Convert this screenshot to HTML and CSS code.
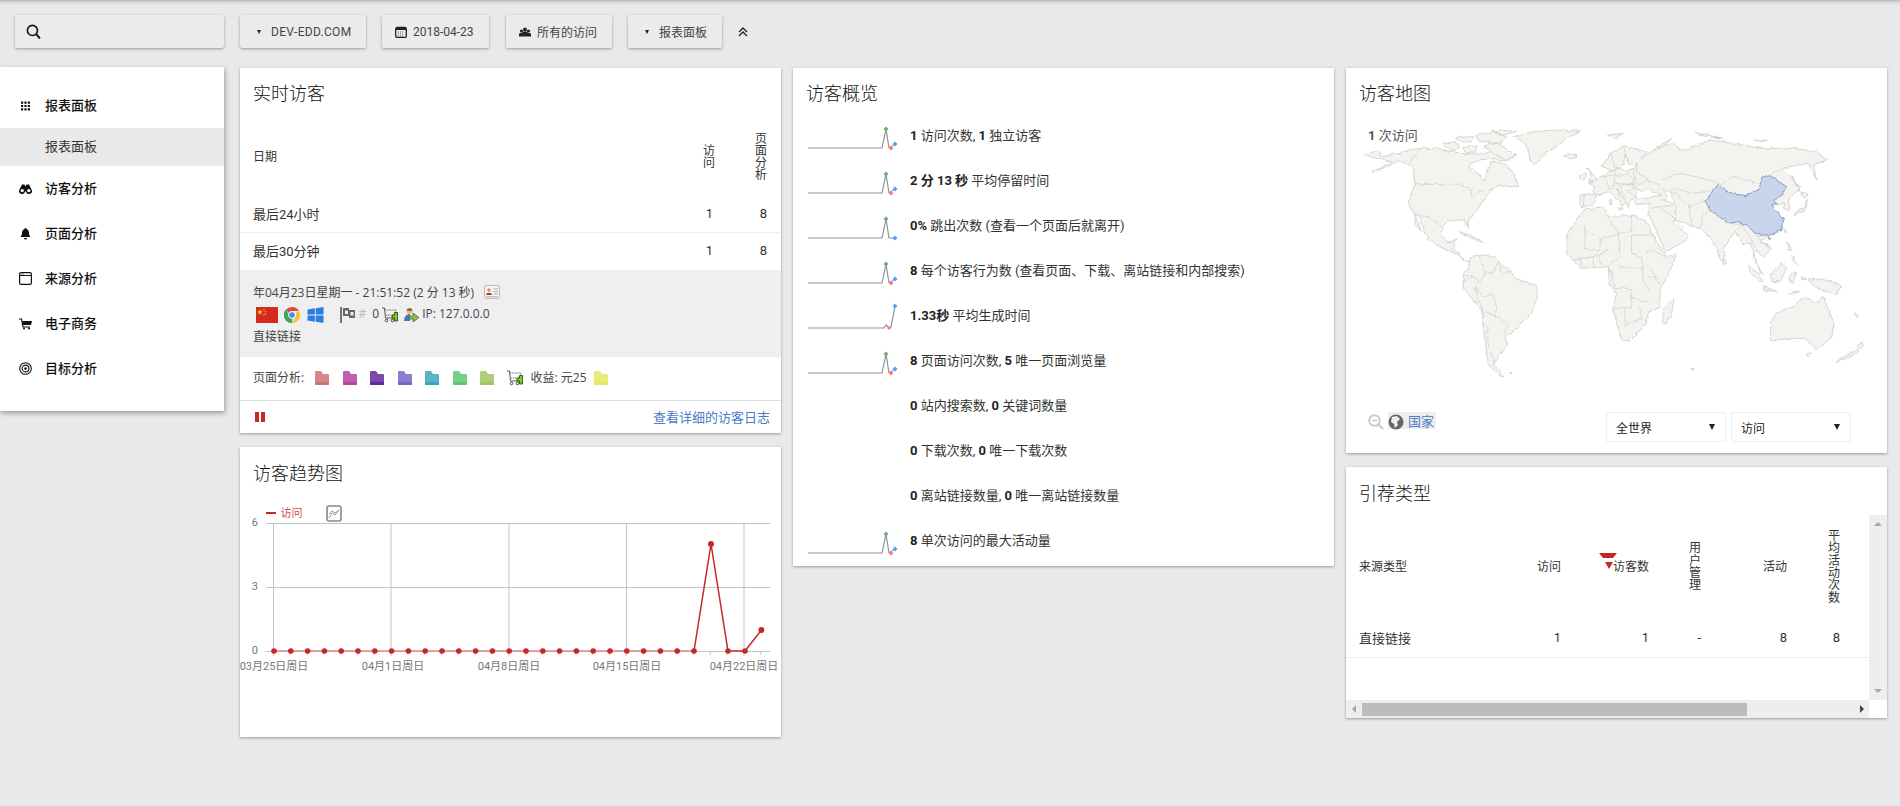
FILE: index.html
```html
<!DOCTYPE html>
<html lang="zh">
<head>
<meta charset="utf-8">
<title>报表面板</title>
<link rel="stylesheet" href="styles.css">
</head>
<body>
<svg class="defs" width="0" height="0" aria-hidden="true">
  <symbol id="folder" viewBox="0 0 14 14">
    <path d="M1 0h5l2 3h5a1 1 0 0 1 1 1v9a1 1 0 0 1-1 1H1a1 1 0 0 1-1-1V1a1 1 0 0 1 1-1z" fill="currentColor" opacity=".85"/>
    <path d="M0 11h14v2a1 1 0 0 1-1 1H1a1 1 0 0 1-1-1z" fill="currentColor"/>
  </symbol>
  <symbol id="cart" viewBox="0 0 16 16">
    <path d="M0 1h2.500l1 10h8" fill="none" stroke="#555" stroke-width="1"/>
    <path d="M3 3h11l-1 5H3.500" fill="none" stroke="#777" stroke-width="1" stroke-dasharray="1.500 .7"/>
    <circle cx="4.500" cy="13.500" r="1.300" fill="none" stroke="#444"/>
    <circle cx="10.500" cy="13.500" r="1.300" fill="none" stroke="#444"/>
    <path d="M10 8h2.500v-2.500h3v2.500h.5v3h-.5v3h-3v-3H10z" fill="#6fd11d" stroke="#1c3a00" stroke-width=".8"/>
  </symbol>
  <symbol id="spark" viewBox="0 0 90 30">
    <path d="M0 27H74L78 8L81 27" fill="none" stroke="#8b93a1" stroke-width="1.200"/>
    <path d="M81 27L87 23" fill="none" stroke="#8b93a1" stroke-width="1"/>
    <path d="M78 5.500l2.500 2.500-2.500 2.500-2.500-2.500z" fill="#6fae6f"/>
    <path d="M83 24.500l2.500 2.500-2.500 2.500-2.500-2.500z" fill="#f77b7b"/>
    <path d="M87 20.500l2.500 2.500-2.500 2.500-2.500-2.500z" fill="#5b9cf6"/>
  </symbol>
  <symbol id="spark-flat" viewBox="0 0 90 30">
    <path d="M0 27H74L78 8L81 27H87" fill="none" stroke="#8b93a1" stroke-width="1.200"/>
    <path d="M78 5.500l2.500 2.500-2.500 2.500-2.500-2.500z" fill="#6fae6f"/>
    <path d="M87 24.500l2.500 2.500-2.500 2.500-2.500-2.500z" fill="#5b9cf6"/>
  </symbol>
  <symbol id="spark-up" viewBox="0 0 90 30">
    <path d="M0 27H76L78 24L81 27L83 26L87 5" fill="none" stroke="#8b93a1" stroke-width="1.200"/>
    <path d="M87 2.500l2.500 2.500-2.500 2.500-2.500-2.500z" fill="#5b9cf6"/>
    <path d="M81 25l2 2-2 2-2-2z" fill="#f77b7b"/>
  </symbol>
</svg>
<div class="topline"></div>
<header class="toolbar">
  <div class="tb search">
    <svg class="ic14" viewBox="0 0 14 14"><circle cx="6" cy="6" r="4.700" fill="none" stroke="#111" stroke-width="1.500"/><path d="M9.500 9.500L13 13.500" stroke="#111" stroke-width="1.800"/></svg>
  </div>
  <div class="tb tb-site"><span class="caret"></span><span>DEV-EDD.COM</span></div>
  <div class="tb tb-date">
    <svg class="ic12" viewBox="0 0 12 12"><rect x=".7" y="1.500" width="10.600" height="10" rx="1.500" fill="none" stroke="#222" stroke-width="1.300"/><path d="M1 1.500h10V4H1z" fill="#222"/><path d="M3 6h6M3 8h6M3 10h6" stroke="#666" stroke-dasharray="1 1"/></svg>
    <span>2018-04-23</span>
  </div>
  <div class="tb tb-seg">
    <svg class="ic12" viewBox="0 0 12 12"><g fill="#222"><circle cx="2.500" cy="5" r="1.600"/><circle cx="9.500" cy="5" r="1.600"/><circle cx="6" cy="3.500" r="1.900"/><path d="M0 10.500V8c0-1.500 4-1.500 5 0v2.500zM7 10.500V8c1-1.500 5-1.500 5 0v2.500zM3 10.500V7c0-2 6-2 6 0v3.500z"/></g></svg>
    <span>所有的访问</span>
  </div>
  <div class="tb tb-board"><span class="caret"></span><span>报表面板</span></div>
  <svg class="chev" viewBox="0 0 10 10"><path d="M1 5l4-4 4 4M1 9l4-4 4 4" fill="none" stroke="#222" stroke-width="1.300"/></svg>
</header>

<main class="layout">
  <nav class="sidebar">
    <div class="nav-item">
      <svg class="nav-ic" viewBox="0 0 13 13"><path d="M2 2.500h2.200v2.200H2zM5.400 2.500h2.200v2.200H5.400zM8.800 2.500H11v2.200H8.800zM2 5.900h2.200v2.200H2zM5.400 5.900h2.200v2.200H5.400zM8.800 5.900H11v2.200H8.800zM2 9.300h2.200v2.200H2zM5.400 9.300h2.200v2.200H5.400zM8.800 9.300H11v2.200H8.800z" fill="#111"/></svg>
      <span>报表面板</span>
    </div>
    <div class="nav-sub">报表面板</div>
    <div class="nav-item">
      <svg class="nav-ic" viewBox="0 0 13 13"><path d="M3 2.500h2.500l1 2 1-2H10l3 6a3 3 0 0 1-6 1H6a3 3 0 0 1-6-1z" fill="#111"/><circle cx="3.200" cy="8.600" r="1.700" fill="#fff"/><circle cx="9.800" cy="8.600" r="1.700" fill="#fff"/></svg>
      <span>访客分析</span>
    </div>
    <div class="nav-item">
      <svg class="nav-ic" viewBox="0 0 13 13"><path d="M6.500 1a1 1 0 0 1 1 1c2 .5 2.500 2.500 2.500 4.500 0 1.500 1 2.500 1.500 3.500h-10C2 9 3 8 3 6.500 3 4.500 3.500 2.500 5.500 2a1 1 0 0 1 1-1z" fill="#111"/><path d="M5 11h3a1.500 1.500 0 0 1-3 0z" fill="#111"/></svg>
      <span>页面分析</span>
    </div>
    <div class="nav-item">
      <svg class="nav-ic" viewBox="0 0 13 13"><rect x=".6" y=".6" width="11.800" height="11.800" rx="1.500" fill="none" stroke="#111" stroke-width="1.200"/><path d="M1 3.500h11" stroke="#111"/><path d="M2 2h3" stroke="#777"/></svg>
      <span>来源分析</span>
    </div>
    <div class="nav-item">
      <svg class="nav-ic" viewBox="0 0 13 13"><path d="M0 2h2.500l1.500 8h7" fill="none" stroke="#111" stroke-width="1.200"/><path d="M3.200 4H13l-1 4H4z" fill="#111"/><circle cx="5" cy="11.500" r="1" fill="#111"/><circle cx="10" cy="11.500" r="1" fill="#111"/></svg>
      <span>电子商务</span>
    </div>
    <div class="nav-item">
      <svg class="nav-ic" viewBox="0 0 13 13"><circle cx="6.500" cy="6.500" r="5.800" fill="none" stroke="#111" stroke-width="1.100"/><circle cx="6.500" cy="6.500" r="3.400" fill="none" stroke="#111" stroke-width="1.100"/><circle cx="6.500" cy="6.500" r="1.300" fill="#111"/></svg>
      <span>目标分析</span>
    </div>
  </nav>

  <div class="col">
    <section class="card card-live">
      <h2 class="card-title">实时访客</h2>
      <table class="live-table">
        <thead>
          <tr><th class="c-name">日期</th><th class="c-a">访问</th><th class="c-b">页面分析</th></tr>
        </thead>
        <tbody>
          <tr><td class="c-name">最后24小时</td><td class="c-a">1</td><td class="c-b">8</td></tr>
          <tr><td class="c-name">最后30分钟</td><td class="c-a">1</td><td class="c-b">8</td></tr>
        </tbody>
      </table>
      <div class="visit">
        <div class="visit-line">
          <span>年04月23日星期一 - 21:51:52 (2 分 13 秒)</span>
          <svg class="ic-card" viewBox="0 0 16 14"><rect x=".5" y=".5" width="15" height="13" rx="1" fill="#f4f4f4" stroke="#bbb"/><circle cx="5" cy="5" r="1.800" fill="#d98a80"/><path d="M2 10c0-3 6-3 6 0z" fill="#c0392b"/><path d="M9.500 4H14M9.500 6.500H14M9.500 9H14M2 11.800h12" stroke="#aaa"/></svg>
        </div>
        <div class="visit-icons">
          <svg class="flag" viewBox="0 0 22 16"><rect width="22" height="16" fill="#d52b1e"/><path d="M4 2l.8 2.200H7L5.200 5.500l.7 2.200L4 6.400 2.100 7.700l.7-2.200L1 4.200h2.200z" fill="#f6c23a"/><circle cx="8" cy="2.500" r=".7" fill="#f6c23a"/><circle cx="9.500" cy="4.500" r=".7" fill="#f6c23a"/><circle cx="9.500" cy="6.500" r=".7" fill="#f6c23a"/><circle cx="8" cy="8" r=".7" fill="#f6c23a"/></svg>
          <svg class="chrome" viewBox="0 0 16 16"><path d="M8 0a8 8 0 0 1 7 4H8a4 4 0 0 0-3.500 2L2 2.500A8 8 0 0 1 8 0z" fill="#dd4b39"/><path d="M15 4a8 8 0 0 1-7 12l3.500-6a4 4 0 0 0 0-4z" fill="#f6c23a"/><path d="M2 2.500L5.500 9a4 4 0 0 0 3 1.500L8 16A8 8 0 0 1 2 2.500z" fill="#3aa757"/><circle cx="8" cy="8" r="3.400" fill="#4a8af4" stroke="#fff" stroke-width="1"/></svg>
          <svg class="win" viewBox="0 0 16 16"><path d="M0 2.500l7.400-1.200v6.300H0zM8.200 1.200L16 0v7.600H8.200zM0 8.400h7.400v6.300L0 13.500zM8.200 8.400H16V16l-7.800-1.200z" fill="#2b7de0"/></svg>
          <svg class="pflag" viewBox="0 0 16 16"><path d="M1 0v16" stroke="#555" stroke-width="1.600"/><path d="M3 1h6v2h6v8H9V9H3z" fill="#666"/><rect x="5" y="3.500" width="3" height="3.500" fill="#eee"/><rect x="10.500" y="5" width="3" height="3.500" fill="#eee"/></svg>
          <span class="hash">#</span>
          <span class="zero">0</span>
          <svg class="ic16 ic-cart"><use href="#cart"/></svg>
          <svg class="ic16 ic-user" viewBox="0 0 16 16"><circle cx="6.500" cy="4" r="3" fill="#e8b48a"/><path d="M3.500 3.500C4 1 9 .5 9.500 3.500z" fill="#7a4a24"/><path d="M1 14c0-6 4-7 6-7v7z" fill="#4a78c0"/><path d="M6 9h4V6l6 4.500L10 15v-3H6z" fill="#8db85a" stroke="#3e6a20" stroke-width=".7"/></svg>
          <span class="ip">IP: 127.0.0.0</span>
        </div>
        <div class="visit-line">直接链接</div>
      </div>
      <div class="pages">
        <span class="pages-label">页面分析:</span>
        <svg class="fld f1"><use href="#folder"/></svg>
        <svg class="fld f2"><use href="#folder"/></svg>
        <svg class="fld f3"><use href="#folder"/></svg>
        <svg class="fld f4"><use href="#folder"/></svg>
        <svg class="fld f5"><use href="#folder"/></svg>
        <svg class="fld f6"><use href="#folder"/></svg>
        <svg class="fld f7"><use href="#folder"/></svg>
        <svg class="ic16 pg-cart"><use href="#cart"/></svg>
        <span class="rev">收益: 元25</span>
        <svg class="fld f8"><use href="#folder"/></svg>
      </div>
      <div class="live-foot">
        <span class="pause"><i></i><i></i></span>
        <a class="link">查看详细的访客日志</a>
      </div>
    </section>

    <section class="card card-trend">
      <h2 class="card-title">访客趋势图</h2>
      <svg class="chart" width="541" height="180" viewBox="0 0 541 180">
        <path class="leg" d="M26 13h10"/>
        <text class="leg-t" x="40.500" y="17">访问</text>
        <g class="exp"><rect x="87" y="6" width="14" height="15" rx="2"/><path d="M89 18l3-5 3 2 4-5M89 14l3-3 3 2 4-3"/></g>
        <g class="grid">
          <path d="M26 23.500H530M26 87.500H530M26 151.500H530"/>
          <path d="M33.500 23V151M151 23V151M269 23V151M386.500 23V151M504 23V151"/>
          <path d="M33.500 151v5M50.300 151v4M67.100 151v4M83.900 151v4M100.700 151v4M117.500 151v4M134.300 151v4M151 151v5M167.900 151v4M184.700 151v4M201.500 151v4M218.300 151v4M235.100 151v4M251.900 151v4M269 151v5M285.500 151v4M302.300 151v4M319.100 151v4M335.900 151v4M352.700 151v4M369.500 151v4M386.500 151v5M403.100 151v4M419.900 151v4M436.700 151v4M453.500 151v4M470.300 151v4M487.100 151v4M504 151v5M520.700 151v4"/>
        </g>
        <g class="ylab"><text x="18" y="26" text-anchor="end">6</text><text x="18" y="90" text-anchor="end">3</text><text x="18" y="154" text-anchor="end">0</text></g>
        <g class="xlab">
          <text x="34" y="170" text-anchor="middle">03月25日周日</text>
          <text x="153" y="170" text-anchor="middle">04月1日周日</text>
          <text x="269" y="170" text-anchor="middle">04月8日周日</text>
          <text x="387" y="170" text-anchor="middle">04月15日周日</text>
          <text x="504" y="170" text-anchor="middle">04月22日周日</text>
        </g>
        <path class="line-base" d="M34 151H454"/>
        <path class="line" d="M454 151L471 44L488 151H505L521.400 130"/>
        <g class="dots">
          <circle cx="34" cy="151" r="2.800"/><circle cx="50.800" cy="151" r="2.800"/><circle cx="67.600" cy="151" r="2.800"/><circle cx="84.400" cy="151" r="2.800"/><circle cx="101.200" cy="151" r="2.800"/><circle cx="118" cy="151" r="2.800"/><circle cx="134.800" cy="151" r="2.800"/><circle cx="151.600" cy="151" r="2.800"/><circle cx="168.400" cy="151" r="2.800"/><circle cx="185.200" cy="151" r="2.800"/><circle cx="202" cy="151" r="2.800"/><circle cx="218.800" cy="151" r="2.800"/><circle cx="235.600" cy="151" r="2.800"/><circle cx="252.400" cy="151" r="2.800"/><circle cx="269.200" cy="151" r="2.800"/><circle cx="286" cy="151" r="2.800"/><circle cx="302.800" cy="151" r="2.800"/><circle cx="319.600" cy="151" r="2.800"/><circle cx="336.400" cy="151" r="2.800"/><circle cx="353.200" cy="151" r="2.800"/><circle cx="370" cy="151" r="2.800"/><circle cx="386.800" cy="151" r="2.800"/><circle cx="403.600" cy="151" r="2.800"/><circle cx="420.400" cy="151" r="2.800"/><circle cx="437.200" cy="151" r="2.800"/><circle cx="454" cy="151" r="2.800"/><circle cx="471" cy="44" r="3"/><circle cx="488" cy="151" r="2.800"/><circle cx="505" cy="151" r="2.800"/><circle cx="521.400" cy="130" r="3"/>
        </g>
      </svg>
    </section>
  </div>

  <div class="col">
    <section class="card card-overview">
      <h2 class="card-title">访客概览</h2>
      <div class="ov-row"><svg class="spark"><use href="#spark"/></svg><span><b>1</b> 访问次数, <b>1</b> 独立访客</span></div>
      <div class="ov-row"><svg class="spark"><use href="#spark"/></svg><span><b>2 分 13 秒</b> 平均停留时间</span></div>
      <div class="ov-row"><svg class="spark"><use href="#spark-flat"/></svg><span><b>0%</b> 跳出次数 (查看一个页面后就离开)</span></div>
      <div class="ov-row"><svg class="spark"><use href="#spark"/></svg><span><b>8</b> 每个访客行为数 (查看页面、下载、离站链接和内部搜索)</span></div>
      <div class="ov-row"><svg class="spark"><use href="#spark-up"/></svg><span><b>1.33秒</b> 平均生成时间</span></div>
      <div class="ov-row"><svg class="spark"><use href="#spark"/></svg><span><b>8</b> 页面访问次数, <b>5</b> 唯一页面浏览量</span></div>
      <div class="ov-row"><i class="spark"></i><span><b>0</b> 站内搜索数, <b>0</b> 关键词数量</span></div>
      <div class="ov-row"><i class="spark"></i><span><b>0</b> 下载次数, <b>0</b> 唯一下载次数</span></div>
      <div class="ov-row"><i class="spark"></i><span><b>0</b> 离站链接数量, <b>0</b> 唯一离站链接数量</span></div>
      <div class="ov-row"><svg class="spark"><use href="#spark"/></svg><span><b>8</b> 单次访问的最大活动量</span></div>
    </section>
  </div>

  <div class="col">
    <section class="card card-map">
      <h2 class="card-title">访客地图</h2>
      <div class="map-wrap">
        <div class="map-note"><b>1</b> 次访问</div>
        <svg class="map" width="510" height="265" viewBox="0 0 1530 795">
          <defs>
            <filter id="rough" filterUnits="userSpaceOnUse" x="0" y="0" width="1530" height="795">
              <feTurbulence type="fractalNoise" baseFrequency="0.055" numOctaves="2" seed="7" result="n"/>
              <feDisplacementMap in="SourceGraphic" in2="n" scale="11" xChannelSelector="R" yChannelSelector="G"/>
            </filter>
          </defs>
          <g filter="url(#rough)">
          <g class="land">
            <path d="M35,143L70,125L95,110L60,100L20,95L15,88L50,78L65,95L95,88L120,85L145,75L185,70L240,70L270,80L310,85L345,90L390,78L430,85L470,88L450,105L420,108L400,100L360,105L335,115L325,125L345,140L362,150L372,165L385,130L395,108L425,115L445,125L465,150L470,170L475,185L450,185L420,180L400,190L382,210L360,240L350,260L325,280L325,310L315,285L295,285L265,288L245,305L245,330L262,355L280,345L290,338L282,365L300,395L325,410L310,405L285,385L255,372L205,345L185,295L175,268L155,260L145,230L165,178L160,130L145,118L115,108L80,125Z"/>
            <path d="M165,268L185,322L165,295Z"/>
            <path d="M300,322L330,330L355,345L325,335Z"/><path d="M350,345L375,350L355,352Z"/>
            <path d="M460,35L510,22L580,15L660,18L620,40L590,65L550,90L525,118L510,110L505,70L490,50Z"/>
            <path d="M250,55L285,50L300,65L280,78L255,65Z"/><path d="M285,38L340,35L335,50L295,50Z"/><path d="M345,28L400,22L440,35L420,55L360,50Z"/><path d="M395,16L470,18L430,30Z"/><path d="M370,62L410,55L470,90L440,105L400,85Z"/><path d="M310,68L350,62L345,85L315,82Z"/>
            <path d="M330,400L355,388L405,395L425,420L455,440L465,460L530,482L535,505L515,565L480,600L450,630L435,630L440,660L415,690L405,720L433,758L410,745L385,715L370,610L365,555L310,490L310,450L325,430Z"/>
            <path d="M448,742l8,2-4,3z"/><path d="M996,730l6,1-4,3z"/>
          </g>
          <g class="border">
            <path d="M165,178L300,178L335,195L335,215M335,215L370,195L400,190M185,70L145,118M160,268L205,275L240,300L245,305M262,355L290,345M275,370L285,385"/>
            <path d="M355,388L375,440L400,445L415,405M415,415L425,445L450,440M375,440L360,470L345,490L370,515L400,510L410,550L405,575L425,580L445,605L430,625M310,450L340,455L360,470M345,490L365,550L370,610M365,555L405,575M380,600L385,660L405,720M310,470L340,455"/>
          </g>
          <g transform="translate(600,0)">
            <g class="land">
              <path d="M20,330L70,255L130,245L145,275L215,270L260,290L290,350L320,395L350,388L325,450L300,490L300,545L270,560L255,600L210,645L185,648L170,590L158,550L170,505L148,475L145,425L65,430L20,385Z"/>
              <path d="M342,520L335,565L315,598L307,580L312,550Z"/>
              <path d="M60,245L60,212L100,208L105,185L85,175L125,155L140,145L170,130L200,135L220,130L235,115L205,118L195,85L190,120L165,140L125,125L150,85L190,65L215,68L262,82L240,100L270,85L300,65L340,55L370,80L400,65L450,45L520,55L600,70L700,70L770,80L800,105L760,120L770,165L745,115L690,125L665,130L700,165L720,190L685,225L690,255L670,250L675,235L655,240L635,240L670,285L665,315L625,332L605,345L630,370L610,400L590,375L580,400L610,450L600,440L570,350L550,360L525,320L495,360L490,415L450,335L420,310L395,303L350,285L338,290L365,315L385,330L375,350L315,380L268,270L262,250L270,236L228,238L222,225L208,228L205,248L197,222L165,190L200,232L188,245L175,225L145,200L130,205L108,212L100,240Z"/>
              <path d="M80,128L105,155L110,170L85,170L95,150Z"/><path d="M60,150L78,145L72,165L60,163Z"/>
              <path d="M175,248L190,250L180,256Z"/><path d="M150,222L156,224L154,240L149,238Z"/>
              <path d="M12,90L50,88L50,98L25,102Z"/><path d="M140,30L190,25L165,40Z"/><path d="M290,68L335,40L310,65Z"/><path d="M405,22L490,40L440,35Z"/><path d="M580,42L625,46L590,48Z"/>
              <path d="M695,150L720,200L705,175Z"/><path d="M702,272L735,255L742,222L730,250L705,262Z"/><path d="M725,200L745,210L730,217Z"/>
              <path d="M490,400L500,415L490,418Z"/><path d="M672,310L678,325L671,322Z"/>
              <path d="M745,465L785,462L845,480L830,510L790,495L770,490Z"/>
              <path d="M565,420L610,465L600,470L570,440Z"/><path d="M612,485L655,500L610,495Z"/><path d="M632,445L665,415L680,430L660,470L635,470Z"/><path d="M685,450L710,445L695,478Z"/><path d="M680,350L695,375L685,375Z"/><path d="M695,395L715,420L700,410Z"/><path d="M680,505L720,498L700,508Z"/><path d="M725,455L740,462L725,465Z"/>
              <path d="M632,590L650,565L700,545L735,515L765,535L790,515L822,595L815,640L770,672L735,640L690,640L631,648Z"/>
              <path d="M738,686L755,684L745,698Z"/><path d="M905,650L910,663L880,690L830,713L835,705L890,675Z"/><path d="M885,565L895,577L888,574Z"/>
            </g>
            <g class="border">
              <path d="M70,305L120,345L175,325L215,320L215,270M75,300L75,365M120,345L120,375L70,370M175,325L180,395M145,275L175,325M215,330L280,330M215,330L215,385L245,400L270,375L320,395M270,430L300,480M245,400L250,470L270,500M150,430L165,490M175,425L250,430M165,490L215,490L215,545L160,550M215,520L265,530M195,550L195,605M235,545L245,580L200,600M35,405L100,395L145,375M60,395L65,425M100,395L100,425M115,385L125,420M180,395L145,425M265,455L300,460"/>
              <path d="M100,208L130,205M130,155L150,190L160,185L165,150M130,155L165,150L170,130M165,150L210,150L225,170L205,180L165,175M165,175L215,178L270,170M200,135L210,150M220,130L225,170M175,180L195,215M195,195L230,190L228,215M215,178L230,190M205,200L225,215M150,85L165,130M190,65L205,110M235,115L225,135L265,165L300,180M72,212L70,245"/>
              <path d="M300,222L340,235M270,250L340,240M300,250L345,280L370,310M345,240L350,285M385,235L395,303M385,245L440,225M395,303L420,310L430,270L450,255"/>
              <path d="M305,165L360,145L430,160L480,178M325,205L345,190L395,205L445,200L475,180M340,200L380,240M480,178L520,155L600,175M525,320L545,300L575,345M575,345L590,375M585,330L630,370M600,350L625,365M630,152L665,130M505,295L560,300"/>
            </g>
            <path class="sea" d="M228,195L270,195L305,210L270,218L228,222Z"/>
            <path class="sea" d="M310,190L335,205L345,240L320,225L315,205Z"/>
            <path class="cn" d="M435,228L475,178L510,205L560,212L598,190L605,160L630,152L680,185L665,210L640,225L655,240L635,240L670,285L665,315L625,332L585,325L560,300L535,290L505,295L470,270L450,255Z"/>
            <path class="cn" d="M625,335L631,340L628,350L623,344Z"/>
          </g>
          </g>
        </svg>
      </div>
      <div class="map-foot">
        <svg class="zoomout" viewBox="0 0 16 16"><circle cx="6.500" cy="6.500" r="5.300" fill="none" stroke="#ccc" stroke-width="2"/><path d="M3.800 6.500h5.400" stroke="#ccc" stroke-width="1.600"/><path d="M10.500 10.500L15 15" stroke="#ccc" stroke-width="2.200"/></svg>
        <div class="country">
          <svg class="globe" viewBox="0 0 16 16"><circle cx="8" cy="8" r="7.500" fill="#666"/><path d="M4 3l5-1 3 3-3 3 1 3-3 3-1-4-3-2z" fill="#eee"/></svg>
          <a class="link">国家</a>
        </div>
        <div class="selects">
          <div class="select"><span>全世界</span><i></i></div>
          <div class="select"><span>访问</span><i></i></div>
        </div>
      </div>
    </section>

    <section class="card card-ref">
      <h2 class="card-title">引荐类型</h2>
      <div class="scroller">
        <div class="sc-body">
          <table class="ref-table">
            <thead>
              <tr>
                <th class="r1">来源类型</th>
                <th class="r2">访问</th>
                <th class="r3"><span class="sort-top"></span><span class="sort-tri"></span>访客数</th>
                <th class="r4">用户管理</th>
                <th class="r5">活动</th>
                <th class="r6">平均活动次数</th>
                <th class="r7"></th>
              </tr>
            </thead>
            <tbody>
              <tr><td class="r1">直接链接</td><td class="r2">1</td><td class="r3">1</td><td class="r4">-</td><td class="r5">8</td><td class="r6">8</td><td class="r7"></td></tr>
            </tbody>
          </table>
        </div>
        <div class="sc-v"><span class="tri-up"></span><span class="tri-down"></span></div>
        <div class="sc-h"><span class="tri-left"></span><span class="thumb"></span><span class="tri-right"></span></div>
        <div class="sc-corner"></div>
      </div>
    </section>
  </div>
</main>
</body>
</html>
```

FILE: styles.css
```css
* { box-sizing: border-box; }
html, body { margin: 0; padding: 0; }
body {
  width: 1900px;
  height: 806px;
  overflow: hidden;
  background: #e9e9e9;
  color: #333;
  font-family: Roboto, "Noto Sans CJK SC", sans-serif;
  font-size: 13px;
}
.defs { position: absolute; }
.topline { height: 1px; background: #bdbdbd; box-shadow: 0 1px 3px rgba(0,0,0,.35); }

.toolbar { display: flex; align-items: center; height: 33px; margin: 14px 0 19px 15px; }
.tb {
  display: flex;
  align-items: center;
  height: 33px;
  margin-right: 16px;
  background: #ebebeb;
  border-radius: 2px;
  box-shadow: 0 1px 3px rgba(0,0,0,.35);
  font-size: 12px;
  color: #444;
}
.search { width: 209px; padding-left: 11px; }
.tb-site { width: 126px; padding-left: 17px; letter-spacing: .3px; }
.tb-date { width: 107px; padding-left: 13px; }
.tb-seg { width: 106px; padding-left: 13px; margin-left: 1px; }
.tb-board { width: 94px; padding-left: 17px; }
.caret {
  width: 0; height: 0; margin-right: 10px;
  border-left: 2.500px solid transparent;
  border-right: 2.500px solid transparent;
  border-top: 4px solid #222;
}
.ic14 { width: 15px; height: 15px; }
.ic12 { width: 12px; height: 12px; margin-right: 6px; }
.chev { width: 10px; height: 10px; }

.layout { display: grid; grid-template-columns: 228px 541px 541px 541px; column-gap: 12px; align-items: start; }
.sidebar {
  width: 224px;
  height: 344px;
  padding-top: 16px;
  background: #fff;
  box-shadow: 1px 2px 5px rgba(0,0,0,.35);
  color: #111;
}
.nav-item { display: flex; align-items: center; height: 45px; padding-left: 19px; font-weight: 500; }
.nav-item span { margin-bottom: 2px; }
.nav-ic { width: 13px; height: 13px; margin-right: 13px; }
.nav-sub { height: 38px; line-height: 37px; padding-left: 45px; background: #e9e9e9; color: #333; }

.col { display: flex; flex-direction: column; gap: 14px; padding-top: 1px; }
.card { background: #fff; border-radius: 1px; box-shadow: 0 1px 3px rgba(0,0,0,.35); }
.card-title { margin: 0; padding: 13px 0 0 13px; font-size: 18px; line-height: 26px; font-weight: 300; color: #111; }

.card-live { height: 365px; display: flex; flex-direction: column; }
.card-live .card-title { height: 60px; }
.live-table { width: 100%; border-collapse: collapse; table-layout: fixed; font-size: 13px; }
.live-table th { height: 68px; padding: 0 0 10px; font-size: 12px; line-height: 12px; font-weight: 400; vertical-align: middle; }
.live-table td { padding: 0; border-bottom: 1px solid #eee; }
.live-table tbody tr:first-child td { height: 36px; }
.live-table tbody tr:last-child td { height: 38px; padding-bottom: 2px; }
.live-table .c-name { text-align: left; padding-left: 13px; }
.live-table .c-a { width: 12px; text-align: right; }
.live-table .c-b { width: 66px; padding-left: 40px; padding-right: 14px; text-align: right; }
.live-table tbody .c-a { padding-right: 2px; }

.visit { height: 86px; padding: 12px 0 0 13px; background: #efefef; font-size: 12px; color: #444; font-family: "Open Sans", "Noto Sans CJK SC", sans-serif; }
.visit-line { display: flex; align-items: center; height: 18px; }
.ic-card { width: 16px; height: 14px; margin-left: 10px; }
.visit-icons { display: flex; align-items: center; height: 16px; margin: 6px 0 4px; padding-left: 2.500px; }
.flag { width: 22px; height: 16px; margin-right: 6px; }
.chrome { width: 16px; height: 16px; margin-right: 7px; }
.win { width: 17px; height: 16px; margin-right: 16px; }
.pflag { width: 16px; height: 16px; margin-right: 3px; }
.hash { color: #bbb; margin-right: 6px; margin-bottom: 3px; }
.zero { margin-right: 3px; margin-bottom: 3px; }
.ic16 { width: 16px; height: 16px; }
.ic-cart { margin-right: 5px; }
.ic-user { margin-right: 3px; }
.ip { color: #445; margin-bottom: 3px; }

.pages { display: flex; align-items: center; height: 44px; padding-left: 13px; border-bottom: 1px solid #ddd; font-size: 12px; color: #444; font-family: "Open Sans", "Noto Sans CJK SC", sans-serif; }
.pages-label { width: 62px; margin-bottom: 2px; }
.fld { width: 14px; height: 14px; margin-right: 13.500px; }
.f1 { color: #cc7373; } .f2 { color: #b8429e; } .f3 { color: #622a99; } .f4 { color: #7467cc; }
.f5 { color: #3aa6bb; } .f6 { color: #5cc970; } .f7 { color: #a0c662; } .f8 { color: #e6e85f; }
.pg-cart { margin: 0 8px 0 -1px; }
.rev { width: 63px; margin-bottom: 2px; }
.live-foot { flex: 1; display: flex; align-items: center; justify-content: space-between; padding: 0 11px 0 15px; }
.pause { display: flex; gap: 2px; }
.pause i { width: 4px; height: 10px; background: #c62828; }
.link { color: #4a7bc4; font-size: 13px; }

.card-trend { height: 290px; }
.card-trend .card-title { height: 53px; padding-top: 14px; }
.chart { display: block; }
.leg { stroke: #c62828; stroke-width: 2; }
.leg-t { font-size: 11px; fill: #d04a4a; }
.exp rect { fill: #fff; stroke: #888; stroke-width: 1.600; }
.exp path { fill: none; stroke: #999; stroke-width: 1; }
.grid path { stroke: #c4c4c4; stroke-width: 1; fill: none; }
.ylab text, .xlab text { font-size: 11px; fill: #777; }
.line-base { stroke: #e08a8a; stroke-width: 1.500; fill: none; }
.line { stroke: #c62828; stroke-width: 1.500; fill: none; }
.dots circle { fill: #c62828; }

.card-overview { height: 498px; }
.card-overview .card-title { height: 45.500px; padding-left: 13px; }
.ov-row { display: flex; align-items: center; height: 45px; padding-left: 15px; font-size: 13px; color: #333; }
.ov-row span { margin-bottom: 4px; }
.ov-row b { font-weight: 700; color: #222; }
.spark { display: block; width: 90px; height: 30px; margin-right: 12px; flex: none; }

.card-map { height: 385px; }
.card-map .card-title { height: 57px; }
.map-wrap { position: relative; margin-left: 14px; width: 510px; height: 265px; }
.map { display: block; }
.map-note { position: absolute; left: 8px; top: 0; padding-right: 4px; font-size: 13px; color: #555; background: #fff; }
.land path { fill: #f4f3f0; stroke: #cecdc9; stroke-width: 2.500; stroke-linejoin: round; }
.border path { fill: none; stroke: #cecdc9; stroke-width: 2.200; stroke-linejoin: round; }
.sea { fill: #fff; stroke: #cecdc9; stroke-width: 2.200; }
.cn { fill: #c9d5ec; stroke: #7f8fb2; stroke-width: 2.500; stroke-linejoin: round; }
.map-foot { display: flex; align-items: flex-start; margin-top: 22px; padding-left: 22px; }
.zoomout { width: 16px; height: 16px; margin-top: 2px; margin-right: 4px; }
.country { display: flex; align-items: center; gap: 4px; height: 17px; width: 48px; background: #eee; }
.globe { width: 16px; height: 16px; flex: none; margin-top: 3px; }
.country .link { font-size: 13px; }
.selects { display: flex; gap: 5px; margin-left: 170px; }
.select { display: flex; align-items: center; justify-content: space-between; width: 120px; height: 30px; padding: 0 10px 0 9px; background: #fff; border: 1px solid #eee; border-radius: 2px; font-size: 12px; color: #222; }
.select i { width: 0; height: 0; border-left: 3px solid transparent; border-right: 3px solid transparent; border-top: 6px solid #222; }

.card-ref { height: 251px; }
.card-ref .card-title { height: 48px; padding-top: 14px; }
.scroller { display: grid; grid-template-columns: 523px 18px; grid-template-rows: 185px 18px; }
.sc-body { overflow: hidden; }
.ref-table { width: 523px; border-collapse: collapse; table-layout: fixed; color: #333; }
.ref-table th { height: 105px; padding: 0 0 1px; font-size: 12px; line-height: 12.400px; font-weight: 400; text-align: right; vertical-align: middle; position: relative; }
.ref-table td { height: 37px; padding: 0 0 2px; text-align: right; border-bottom: 1px solid #eee; font-size: 13px; }
.ref-table .r1 { width: 179px; padding-left: 13px; text-align: left; }
.ref-table .r2 { width: 36px; }
.ref-table .r3 { width: 88px; }
.ref-table .r4 { width: 52px; padding-left: 40px; }
.ref-table .r5 { width: 86px; }
.ref-table .r6 { width: 53px; padding-left: 41px; }
.ref-table .r7 { width: 29px; }
.sort-top { position: absolute; right: 32px; top: 38px; width: 18px; height: 5px; background: #c62828; clip-path: polygon(0 0, 100% 0, 78% 100%, 22% 100%); }
.sort-tri { display: inline-block; width: 0; height: 0; border-left: 4.500px solid transparent; border-right: 4.500px solid transparent; border-top: 7px solid #c62828; vertical-align: 2px; }
.sc-v { display: flex; flex-direction: column; justify-content: space-between; align-items: center; padding: 7px 0; background: #eee; }
.sc-h { display: flex; align-items: center; padding: 0 5px 0 6px; background: #eee; }
.sc-corner { background: #fff; }
.thumb { width: 385px; height: 13px; margin-left: 6px; margin-right: auto; background: #bcbcbc; }
.tri-up, .tri-down { width: 0; height: 0; border-left: 4px solid transparent; border-right: 4px solid transparent; }
.tri-up { border-bottom: 4px solid #a5a5a5; }
.tri-down { border-top: 4px solid #a5a5a5; }
.tri-left, .tri-right { width: 0; height: 0; border-top: 4px solid transparent; border-bottom: 4px solid transparent; }
.tri-left { border-right: 4px solid #a5a5a5; }
.tri-right { border-left: 4px solid #444; }
```
